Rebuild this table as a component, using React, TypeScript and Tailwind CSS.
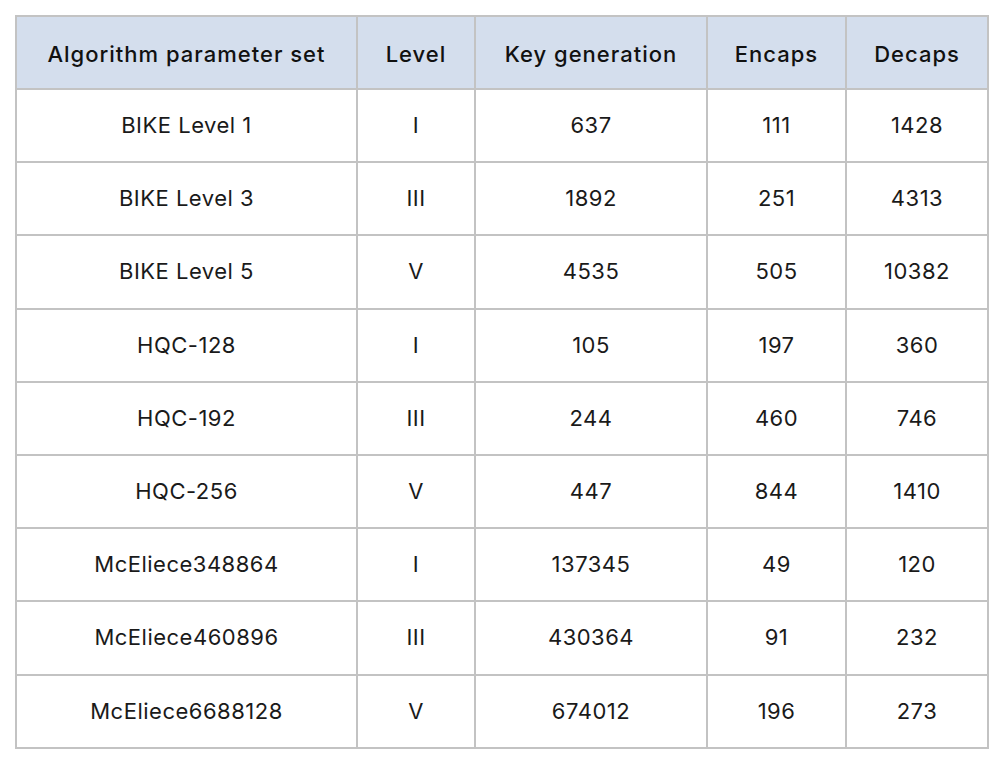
import React from "react";

const headers = ["Algorithm parameter set", "Level", "Key generation", "Encaps", "Decaps"];
const rows: string[][] = [
  ["BIKE Level 1", "I", "637", "111", "1428"],
  ["BIKE Level 3", "III", "1892", "251", "4313"],
  ["BIKE Level 5", "V", "4535", "505", "10382"],
  ["HQC-128", "I", "105", "197", "360"],
  ["HQC-192", "III", "244", "460", "746"],
  ["HQC-256", "V", "447", "844", "1410"],
  ["McEliece348864", "I", "137345", "49", "120"],
  ["McEliece460896", "III", "430364", "91", "232"],
  ["McEliece6688128", "V", "674012", "196", "273"],
];

export default function App() {
  return (
    <div className="w-[1004px] h-[766px] bg-white pt-[15px] pl-[15px]" style={{ fontFamily: 'Inter, "Noto Sans", sans-serif' }}>
      <div className="grid w-[974px] grid-cols-[339px_116px_230px_137px_140px] gap-[2px] bg-[#c3c3c3] p-[2px]">
        {headers.map((h) => (
          <div key={h} className="flex h-[71px] items-center justify-center bg-[#d4deed] pt-[3px] text-[22px] font-medium tracking-[1px] text-[#111]">
            {h}
          </div>
        ))}
        {rows.map((r, i) =>
          r.map((c, j) => (
            <div key={i + "-" + j} className="flex h-[71.2px] items-center justify-center bg-white text-[22px] tracking-[0.5px] text-[#1a1a1a]">
              {c}
            </div>
          ))
        )}
      </div>
    </div>
  );
}
